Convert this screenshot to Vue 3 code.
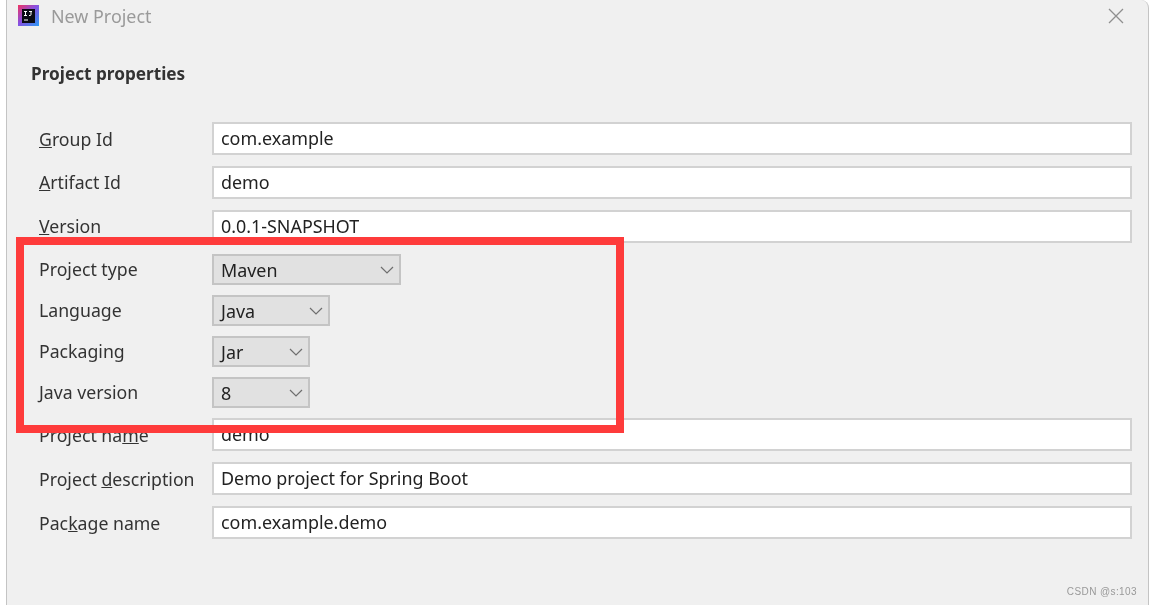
<script setup>
const rows = [
  { pre: '', key: 'G', post: 'roup Id', value: 'com.example', kind: 'text', gap: 11 },
  { pre: '', key: 'A', post: 'rtifact Id', value: 'demo', kind: 'text', gap: 11, up: true },
  { pre: '', key: 'V', post: 'ersion', value: '0.0.1-SNAPSHOT', kind: 'text', gap: 11, up: true },
  { pre: 'Project type', key: '', post: '', value: 'Maven', kind: 'choice', w: 189, gap: 10, up: true },
  { pre: 'Language', key: '', post: '', value: 'Java', kind: 'choice', w: 118, gap: 10, up: true },
  { pre: 'Packaging', key: '', post: '', value: 'Jar', kind: 'choice', w: 98, gap: 10, up: true },
  { pre: 'Java version', key: '', post: '', value: '8', kind: 'choice', w: 98, gap: 10, up: true },
  { pre: 'Project na', key: 'm', post: 'e', value: 'demo', kind: 'text', gap: 11 },
  { pre: 'Project ', key: 'd', post: 'escription', value: 'Demo project for Spring Boot', kind: 'text', gap: 11 },
  { pre: 'Pac', key: 'k', post: 'age name', value: 'com.example.demo', kind: 'text', gap: 11 },
]
</script>

<template>
  <div class="page">
    <div class="window">
      <header class="titlebar">
        <svg class="logo" width="21" height="21" viewBox="0 0 21 21">
          <defs>
            <linearGradient id="ij" x1="0" y1="0" x2="1" y2="1">
              <stop offset="0" stop-color="#f0325f" />
              <stop offset="0.45" stop-color="#8a4fe0" />
              <stop offset="1" stop-color="#2a9af5" />
            </linearGradient>
          </defs>
          <rect width="21" height="21" fill="url(#ij)" />
          <rect x="4" y="4" width="13" height="14" fill="#0a0a14" />
          <path d="M6 6.500h3M7.500 6.500v4M6 10.500h3M11 6.500h3M13 6.500v3q0 1-1 1h-1M6 15h4" stroke="#fff" stroke-width="1" fill="none" />
        </svg>
        <span class="title">New Project</span>
        <svg class="close" width="16" height="16" viewBox="0 0 16 16">
          <path d="M1 1l14 14M15 1L1 15" stroke="#8f8f8f" stroke-width="1.300" fill="none" />
        </svg>
      </header>
      <h2 class="heading">Project properties</h2>
      <div class="form">
        <div v-for="r in rows" :key="r.value + r.pre + r.post" class="row" :style="{ marginBottom: r.gap + 'px' }">
          <label class="label" :class="{ raised: r.up }">{{ r.pre }}<u v-if="r.key">{{ r.key }}</u>{{ r.post }}</label>
          <div v-if="r.kind === 'text'" class="field">{{ r.value }}</div>
          <div v-else class="select" :style="{ width: r.w + 'px' }">
            <span>{{ r.value }}</span>
            <svg width="14" height="8" viewBox="0 0 14 8"><path d="M1 1l6 6 6-6" stroke="#6e6e6e" stroke-width="1.200" fill="none" /></svg>
          </div>
        </div>
      </div>
      <div class="mark">CSDN @s:103</div>
    </div>
    <div class="highlight"></div>
  </div>
</template>

<style scoped>
.page {
  position: relative;
  width: 1152px;
  height: 605px;
  background: #fff;
  overflow: hidden;
  font-family: "Noto Sans", "Open Sans", sans-serif;
  color: #2b2b2b;
}
.window {
  position: relative;
  box-sizing: border-box;
  width: 1143px;
  height: 605px;
  margin-left: 6px;
  background: #f0f0f0;
  border: 1px solid #c4c4c4;
  border-top: none;
  border-bottom: none;
  border-top-right-radius: 8px;
  filter: blur(0.35px);
}
.titlebar {
  display: flex;
  align-items: center;
  height: 31px;
  padding: 0 24px 0 11px;
}
.logo { flex: none; }
.title {
  margin-left: 12px;
  font-size: 17.900px;
  color: #9a9a9a;
}
.close { margin-left: auto; }
.heading {
  margin: 30px 0 0 24px;
  font-size: 17.200px;
  line-height: 26px;
  font-weight: 700;
  color: #333;
}
.form {
  margin-top: 35px;
  padding: 0 16px 0 32px;
}
.row {
  display: flex;
  align-items: center;
}
.label {
  flex: none;
  width: 173px;
  font-size: 17.700px;
  line-height: 24px;
  color: #333;
}
.label.raised {
  margin-bottom: 2px;
}
.label u {
  text-underline-offset: 1px;
  text-decoration-skip-ink: none;
}
.field {
  flex: 1;
  box-sizing: border-box;
  height: 33px;
  padding: 0 7px;
  background: #fff;
  border: 2px solid #d2d2d2;
  font-size: 17.900px;
  line-height: 29px;
  color: #222;
}
.select {
  display: flex;
  align-items: center;
  justify-content: space-between;
  box-sizing: border-box;
  height: 31px;
  padding: 0 5px 0 7px;
  background: #e1e1e1;
  border: 2px solid #c4c4c4;
  font-size: 17.900px;
  color: #222;
}
.mark {
  position: absolute;
  right: 11px;
  bottom: 8px;
  font-family: "Liberation Sans", sans-serif;
  font-size: 10px;
  letter-spacing: 0.4px;
  color: #999;
}
.highlight {
  position: absolute;
  left: 16px;
  top: 237px;
  width: 608px;
  height: 196px;
  box-sizing: border-box;
  border: 8px solid #fe3b3b;
}
</style>
